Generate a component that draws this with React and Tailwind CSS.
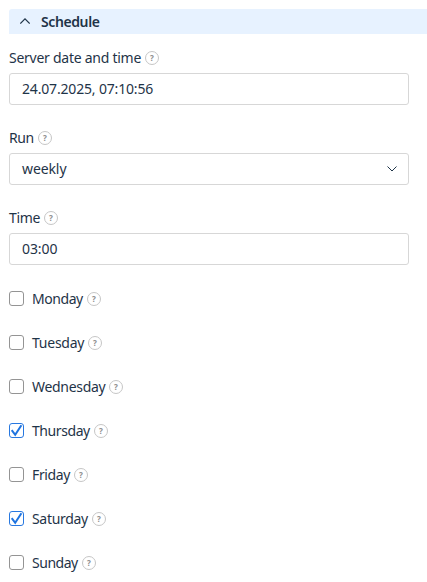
import { useState } from "react";

const DAYS = [
    { name: "Monday", width: "w-[52px]", tracking: "tracking-[-0.45px]" },
    { name: "Tuesday", width: "w-[53px]", tracking: "tracking-[-0.25px]" },
    { name: "Wednesday", width: "w-[74px]", tracking: "tracking-[-0.3px]" },
    { name: "Thursday", width: "w-[59px]", tracking: "tracking-[-0.42px]" },
    { name: "Friday", width: "w-[39px]", tracking: "tracking-[-0.35px]" },
    { name: "Saturday", width: "w-[57px]", tracking: "tracking-[-0.32px]" },
    { name: "Sunday", width: "w-[47px]", tracking: "tracking-[-0.48px]" },
];

function HelpIcon() {
    return (
        <span className="ml-[3px] flex size-[14px] shrink-0 items-center justify-center rounded-full border border-[#c6c6c6] font-['Noto_Sans',sans-serif] text-[8px] font-bold leading-none text-[#8c8c8c]">
            ?
        </span>
    );
}

function FieldLabel({ text, className }) {
    return (
        <div className="flex h-5 items-center">
            <span className={`whitespace-nowrap ${className}`}>{text}</span>
            <HelpIcon />
        </div>
    );
}

function DayCheckbox({ day, checked, onToggle }) {
    return (
        <div className="flex h-5 items-center">
            <button
                type="button"
                role="checkbox"
                aria-checked={checked}
                aria-label={day.name}
                onClick={onToggle}
                className={`mb-px mr-2 size-[15px] shrink-0 rounded-[3px] border bg-white ${checked ? "border-[#2878e0]" : "border-[#949494]"}`}
            >
                {checked && (
                    <svg viewBox="0 0 13 13" className="size-[13px]" fill="none" stroke="#1f74e0" strokeWidth="2">
                        <path d="M1.7 6.2 5.2 10.8 11.4 1.2" />
                    </svg>
                )}
            </button>
            <span className={`whitespace-nowrap ${day.width} ${day.tracking}`}>{day.name}</span>
            <HelpIcon />
        </div>
    );
}

export default function App() {
    const [selected, setSelected] = useState(["Thursday", "Saturday"]);

    const toggleDay = (name) => {
        setSelected(selected.includes(name) ? selected.filter((d) => d !== name) : [...selected, name]);
    };

    return (
        <div className="h-[582px] w-[427px] overflow-hidden bg-white pl-[9px] pt-[9px] font-['Noto_Sans',sans-serif] text-[14px] leading-5 text-[#1f3448]">
            {/* Section header */}
            <div className="flex h-[25px] items-center rounded-tl-[3px] bg-[#e7f2ff] pl-[11px]">
                <svg viewBox="0 0 10 6" className="mb-[2px] h-[6px] w-[10px]" fill="none" stroke="#1f3448" strokeWidth="1.2">
                    <path d="M.3 5.6 5 .9l4.7 4.7" />
                </svg>
                <span className="ml-[11px] font-semibold tracking-[-0.4px]">Schedule</span>
            </div>

            <div className="w-[400px] pt-[14px]">
                {/* Server date */}
                <FieldLabel text="Server date and time" className="w-[133px] tracking-[-0.26px]" />
                <div className="mt-[5px] flex h-8 items-center rounded-[3px] border border-[#d7d7d7] px-3">
                    <span className="whitespace-nowrap tracking-[-0.17px]">24.07.2025, 07:10:56</span>
                </div>

                {/* Run period */}
                <div className="mt-[23px]">
                    <FieldLabel text="Run" className="w-[26px] tracking-[-0.4px]" />
                </div>
                <div className="mt-[5px] flex h-8 items-center justify-between rounded-[3px] border border-[#d7d7d7] pl-3 pr-[11px]">
                    <span className="tracking-[-0.1px]">weekly</span>
                    <svg viewBox="0 0 10 6" className="h-[6px] w-[10px]" fill="none" stroke="#1f3448" strokeWidth="1">
                        <path d="M.5.5 5 5 9.5.5" />
                    </svg>
                </div>

                {/* Start time */}
                <div className="mt-[23px]">
                    <FieldLabel text="Time" className="w-[32px] tracking-[-0.3px]" />
                </div>
                <div className="mt-[5px] flex h-8 items-center rounded-[3px] border border-[#d7d7d7] px-3">
                    <span className="tracking-[-0.1px]">03:00</span>
                </div>

                {/* Days of the week */}
                <div className="mt-6 flex flex-col gap-6">
                    {DAYS.map((day) => (
                        <DayCheckbox
                            key={day.name}
                            day={day}
                            checked={selected.includes(day.name)}
                            onToggle={() => toggleDay(day.name)}
                        />
                    ))}
                </div>
            </div>
        </div>
    );
}
